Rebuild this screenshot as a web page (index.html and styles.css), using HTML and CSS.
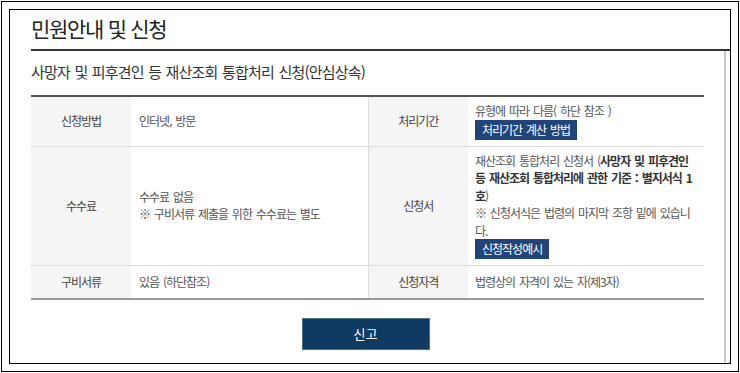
FILE: index.html
```html
<!DOCTYPE html>
<html lang="ko">
<head>
    <meta charset="UTF-8">
    <meta name="viewport" content="width=device-width, initial-scale=1.0">
    <title>민원안내 및 신청</title>
    <link rel="stylesheet" href="styles.css">
</head>
<body>
    <div class="frame">
        <div class="popup">
            <!-- Popup header -->
            <div class="popup-head">
                <h1 class="popup-title">민원안내 및 신청</h1>
            </div>

            <!-- Popup body -->
            <div class="popup-body">
                <h2 class="sub-title">사망자 및 피후견인 등 재산조회 통합처리 신청(안심상속)</h2>

                <table class="info-table">
                    <colgroup>
                        <col class="col-th">
                        <col class="col-td">
                        <col class="col-th">
                        <col>
                    </colgroup>
                    <tbody>
                        <tr>
                            <th>신청방법</th>
                            <td class="td-split">인터넷, 방문</td>
                            <th>처리기간</th>
                            <td>
                                유형에 따라 다름( 하단 참조 )<br>
                                <a href="#" class="btn-small">처리기간 계산 방법</a>
                            </td>
                        </tr>
                        <tr>
                            <th>수수료</th>
                            <td class="td-split">수수료 없음<br>※ 구비서류 제출을 위한 수수료는 별도</td>
                            <th>신청서</th>
                            <td>
                                재산조회 통합처리 신청서 (<b>사망자 및 피후견인 등 재산조회 통합처리에 관한 기준 : 별지서식 1호</b>)<br>
                                ※ 신청서식은 법령의 마지막 조항 밑에 있습니다.<br>
                                <a href="#" class="btn-small">신청작성예시</a>
                            </td>
                        </tr>
                        <tr class="row-last">
                            <th>구비서류</th>
                            <td class="td-split">있음 (하단참조)</td>
                            <th>신청자격</th>
                            <td>법령상의 자격이 있는 자(제3자)</td>
                        </tr>
                    </tbody>
                </table>

                <div class="btn-area">
                    <a href="#" class="btn-submit">신고</a>
                </div>
            </div>
        </div>
    </div>
</body>
</html>
```

FILE: styles.css
```css
* {
    box-sizing: border-box;
}

body {
    margin: 0;
    padding: 0;
    background: #fff;
    font-family: "Noto Sans CJK KR", "Noto Sans", sans-serif;
    color: #555;
}

/* Outer window frame */
.frame {
    width: 738px;
    height: 371px;
    margin: 1px;
    padding: 7px;
    border: 1px solid #000;
}

.popup {
    display: flex;
    flex-direction: column;
    height: 100%;
    padding-left: 21px;
    border: 1px solid #000;
}

/* Header */
.popup-head {
    padding: 4px 0 7px;
    border-bottom: 2px solid #333;
}

.popup-title {
    margin: 0;
    font-size: 21px;
    line-height: 28px;
    font-weight: 400;
    letter-spacing: -1.3px;
    color: #222;
}

/* Body */
.popup-body {
    flex: 1;
    margin-right: 4px;
    padding-right: 20px;
    border-right: 2px solid #c8c8c8;
}

.sub-title {
    margin: 11px 0 13px;
    font-size: 15px;
    line-height: 20px;
    font-weight: 400;
    letter-spacing: -0.8px;
    word-spacing: 1px;
    color: #333;
}

/* Info table */
.info-table {
    width: 100%;
    border-collapse: collapse;
    border-top: 2px solid #555;
    border-bottom: 2px solid #999;
    font-size: 12px;
    line-height: 17.5px;
    letter-spacing: -1px;
    word-spacing: 1.5px;
}

.col-th {
    width: 100px;
}

.col-td {
    width: 237px;
}

.info-table tr {
    border-bottom: 1px solid #ddd;
}

.info-table th {
    padding: 5px 7px 6px;
    background: #f5f5f5;
    font-weight: 400;
    color: #444;
    text-align: center;
    vertical-align: middle;
}

.info-table td {
    padding: 5px 8px 6px 7px;
    text-align: left;
    vertical-align: middle;
}

.info-table .td-split {
    padding-left: 8px;
    border-right: 1px solid #ddd;
}

.info-table b {
    color: #333;
}

.info-table .row-last th,
.info-table .row-last td {
    padding-top: 7px;
    padding-bottom: 7px;
}

.btn-small {
    display: inline-block;
    height: 20px;
    padding: 0 7px;
    background: #21447a;
    color: #fff;
    line-height: 20px;
    text-decoration: none;
    vertical-align: top;
}

/* Submit button */
.btn-area {
    margin-top: 18px;
    text-align: center;
}

.btn-submit {
    display: inline-block;
    width: 128px;
    height: 32px;
    margin-right: 4px;
    border: 1px solid #4f6e8f;
    background: #0f3a62;
    color: #fff;
    font-size: 13px;
    line-height: 30px;
    text-decoration: none;
}
```
